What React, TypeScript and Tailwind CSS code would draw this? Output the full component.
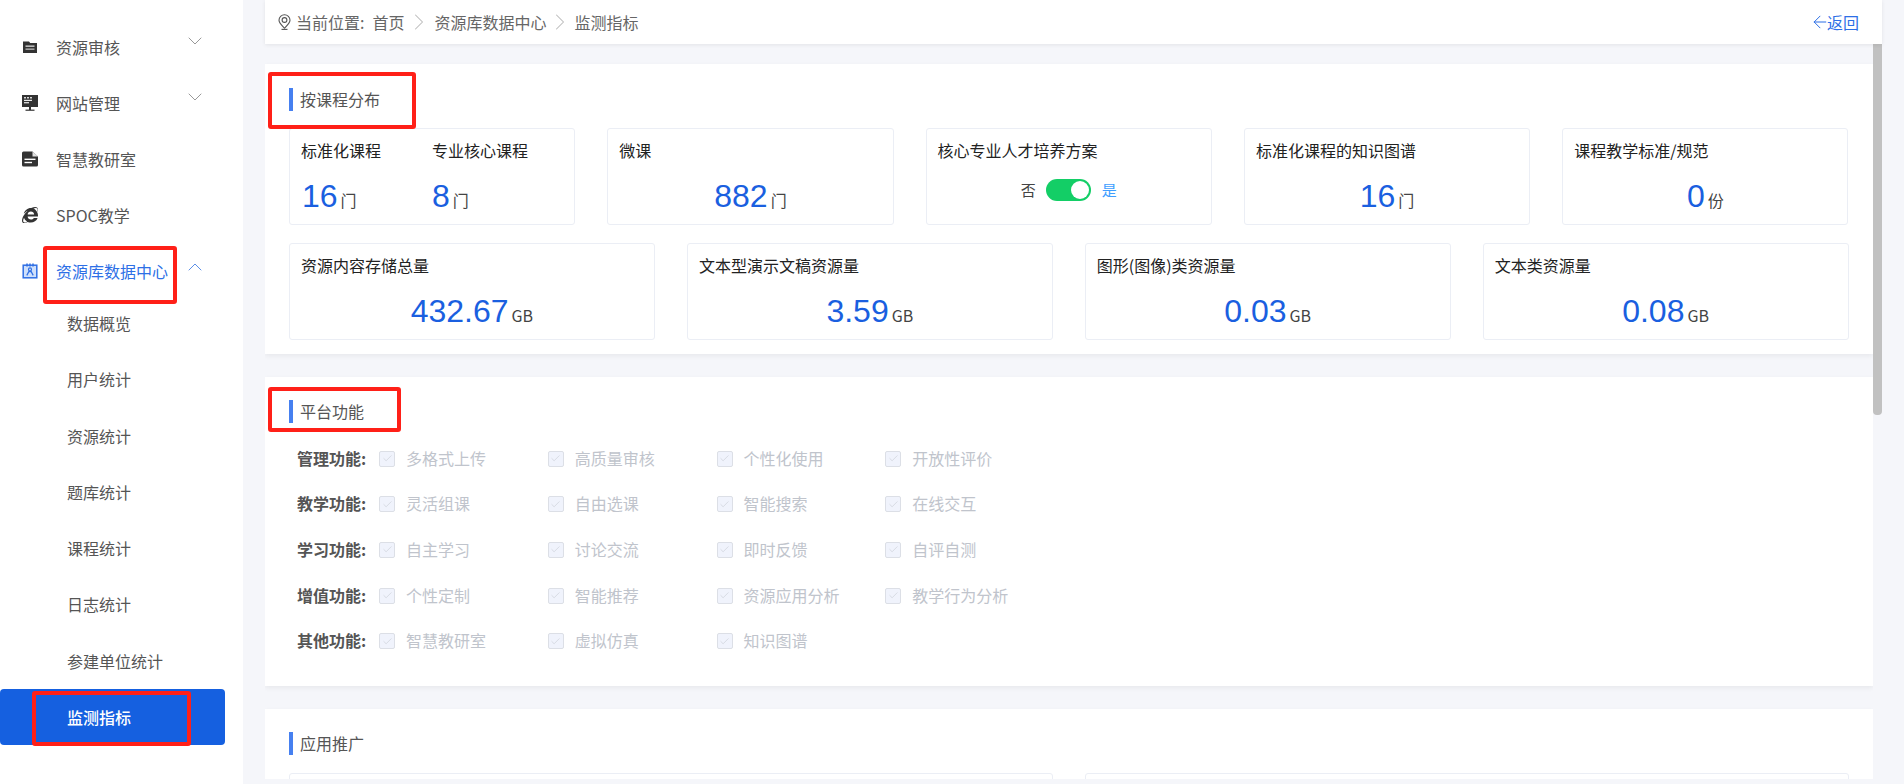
import React from "react";
import { ChevronDown, ChevronUp, ChevronRight, ArrowLeft, Check } from "lucide-react";
import { FaInternetExplorer } from "react-icons/fa";

const FolderIcon = () => (
  <svg width="16" height="16" viewBox="0 0 16 16" className="shrink-0">
    <path d="M1 2.5h6l1.2 1.4H15V14H1z" fill="#333" />
    <rect x="3.5" y="6.5" width="9" height="1.3" fill="#ddd" />
    <rect x="3.5" y="9.5" width="9" height="1.3" fill="#bbb" />
  </svg>
);
const MonitorIcon = () => (
  <svg width="16" height="16" viewBox="0 0 16 16" className="shrink-0">
    <rect x="0" y="0" width="16" height="12" fill="#333" />
    <rect x="2" y="2.2" width="2" height="1.2" fill="#fff" />
    <rect x="5" y="2.2" width="2" height="1.2" fill="#fff" />
    <rect x="8" y="2.2" width="2" height="1.2" fill="#fff" />
    <rect x="2" y="4.8" width="8" height="1.1" fill="#fff" />
    <rect x="2" y="7.2" width="5" height="1.1" fill="#fff" />
    <rect x="7" y="12" width="2" height="3" fill="#333" />
    <rect x="3.5" y="14.6" width="9" height="1.2" fill="#333" />
  </svg>
);
const DocIcon = () => (
  <svg width="16" height="16" viewBox="0 0 16 16" className="shrink-0">
    <path d="M1.5 0.5H10.5L16 5.5V14a1.5 1.5 0 0 1-1.5 1.5H1.5A1.5 1.5 0 0 1 0 14V2A1.5 1.5 0 0 1 1.5 .5z" fill="#333" />
    <path d="M10.5 .5V5.5H16z" fill="#fff" opacity="0.85" />
    <rect x="2.5" y="7.6" width="11" height="1.4" fill="#fff" />
    <rect x="2.5" y="10.8" width="7.5" height="1.4" fill="#fff" />
  </svg>
);
const IdIcon = () => (
  <svg width="16" height="16" viewBox="0 0 16 16" className="shrink-0">
    <rect x="1.2" y="2.2" width="13.6" height="12.6" fill="#cfe0fb" stroke="#2f6fe4" strokeWidth="1.5" />
    <path d="M5 0.5v3M8 0.5v3M11 0.5v3" stroke="#2f6fe4" strokeWidth="1.5" />
    <circle cx="8" cy="6.4" r="1.5" fill="none" stroke="#2f6fe4" strokeWidth="1.2" />
    <path d="M4.8 12.4L6.8 8.6h2.4l2 3.8" fill="none" stroke="#2f6fe4" strokeWidth="1.2" />
  </svg>
);
const PinIcon = () => (
  <svg width="13" height="16" viewBox="0 0 13 16" className="shrink-0" fill="none" stroke="#555" strokeWidth="1.1">
    <path d="M6.5 14.2C3.4 11 1 8.8 1 6.2a5.5 5.5 0 0 1 11 0c0 2.6-2.4 4.8-5.5 8z" />
    <circle cx="6.5" cy="6" r="2.4" />
    <path d="M3.5 15.4h6" />
  </svg>
);

const RedBox = ({ className }: { className: string }) => (
  <div className={`absolute border-4 border-[#ff2018] rounded-[3px] pointer-events-none ${className}`} />
);

const topItems = [
  { label: "资源审核", icon: <FolderIcon />, chevron: true },
  { label: "网站管理", icon: <MonitorIcon />, chevron: true },
  { label: "智慧教研室", icon: <DocIcon />, chevron: false },
  { label: "SPOC教学", icon: <FaInternetExplorer size={16} color="#333" className="shrink-0" />, chevron: false },
];
const subItems = ["数据概览", "用户统计", "资源统计", "题库统计", "课程统计", "日志统计", "参建单位统计"];

const Sidebar = () => (
  <aside className="w-[243px] h-[784px] shrink-0 bg-white pt-[19px] pr-[18px] text-[16px] leading-[24px] text-[#555]">
    {topItems.map((it) => (
      <div key={it.label} className="relative h-[56px] flex items-center pl-[22px] pr-[18px]">
        {it.icon}
        <span className="ml-[18px]">{it.label}</span>
        {it.chevron && <ChevronDown size={24} strokeWidth={1} color="#999" className="ml-auto mb-[12px]" />}
      </div>
    ))}
    <div className="relative h-[56px] flex items-center pl-[22px] pr-[18px] text-[#2d6fe6]">
      <IdIcon />
      <span className="ml-[18px]">资源库数据中心</span>
      <ChevronUp size={24} strokeWidth={1} color="#5b8fe8" className="ml-auto mb-[8px]" />
      <RedBox className="left-[43px] top-[3px] w-[134px] h-[58px]" />
    </div>
    <div className="-mt-[4px]">
      {subItems.map((s) => (
        <div key={s} className="h-[56.25px] flex items-center pl-[68px] -translate-x-px">{s}</div>
      ))}
      <div className="relative h-[56px] flex items-center pl-[68px] rounded-[4px] bg-[#1560e0] text-white font-medium">
        <span className="-translate-x-px">监测指标</span>
        <RedBox className="left-[32px] top-[2px] w-[159px] h-[55px]" />
      </div>
    </div>
  </aside>
);

const Num = ({ value, unit }: { value: string; unit: string }) => (
  <div className="flex items-baseline h-[40px] leading-[40px]">
    <span className="text-[32px] text-[#1a5fe0] font-['Liberation_Sans',sans-serif]">{value}</span>
    <span className="ml-[3px] text-[16px] text-[#444]">{unit}</span>
  </div>
);

const Card = ({ title, children, className = "" }: { title?: string; children?: React.ReactNode; className?: string }) => (
  <div className={`h-[97px] border border-[#ebeef5] rounded-[3px] bg-white px-[11px] pt-[9px] text-[#222] ${className}`}>
    {title && <div className="text-[16px] leading-[24px]">{title}</div>}
    {children}
  </div>
);

const StatCard = ({ title, value, unit }: { title: string; value: string; unit: string }) => (
  <Card title={title}>
    <div className="mt-[14px] flex justify-center">
      <Num value={value} unit={unit} />
    </div>
  </Card>
);

const Title = ({ text }: { text: string }) => (
  <div className="flex items-center h-[23px] text-[16px] text-[#555]">
    <div className="w-[4px] h-[23px] bg-[#4680f0]" />
    <span className="ml-[7px] -translate-y-px">{text}</span>
  </div>
);

const funcs = [
  { label: "管理功能:", items: ["多格式上传", "高质量审核", "个性化使用", "开放性评价"] },
  { label: "教学功能:", items: ["灵活组课", "自由选课", "智能搜索", "在线交互"] },
  { label: "学习功能:", items: ["自主学习", "讨论交流", "即时反馈", "自评自测"] },
  { label: "增值功能:", items: ["个性定制", "智能推荐", "资源应用分析", "教学行为分析"] },
  { label: "其他功能:", items: ["智慧教研室", "虚拟仿真", "知识图谱"] },
];

const sectionClass = "relative bg-white px-[24px] shadow-[0_2px_5px_rgba(0,0,0,0.06)]";

export default function App() {
  return (
    <div className="flex w-[1904px] h-[784px] overflow-hidden bg-[#f5f6fa] font-['Noto_Sans_CJK_SC',sans-serif]">
      <Sidebar />
      <main className="ml-[22px] w-[1617px] h-[784px] flex flex-col">
        <header className="relative z-10 h-[44px] shrink-0 bg-white shadow-[0_1px_4px_rgba(0,0,0,0.08)] flex items-center pl-[13px] pr-[23px] text-[16px] text-[#666]">
          <PinIcon />
          <span className="ml-[5px]">当前位置:</span>
          <span className="ml-[8px]">首页</span>
          <ChevronRight size={28} strokeWidth={0.9} color="#bbb" className="ml-[1px] mr-[1px]" />
          <span>资源库数据中心</span>
          <ChevronRight size={28} strokeWidth={0.9} color="#bbb" />
          <span>监测指标</span>
          <span className="ml-auto flex items-center text-[#2d6fe6]">
            <ArrowLeft size={20} strokeWidth={1.2} className="-mr-[3px]" />
            返回
          </span>
        </header>
        <div className="flex h-[735px] overflow-hidden">
          <div className="w-[1608px] pt-[20px] overflow-hidden">
            <section className={`${sectionClass} h-[290px] pt-[24px]`}>
              <Title text="按课程分布" />
              <RedBox className="left-[3px] top-[8px] w-[148px] h-[57px]" />
              <div className="mt-[17px] grid grid-cols-5 gap-x-[32px] w-[1559.5px]">
                <Card>
                  <div className="flex">
                    <div className="w-[131px]">
                      <div className="text-[16px] leading-[24px]">标准化课程</div>
                      <div className="mt-[14px] pl-[1px]"><Num value="16" unit="门" /></div>
                    </div>
                    <div>
                      <div className="text-[16px] leading-[24px]">专业核心课程</div>
                      <div className="mt-[14px]"><Num value="8" unit="门" /></div>
                    </div>
                  </div>
                </Card>
                <StatCard title="微课" value="882" unit="门" />
                <Card title="核心专业人才培养方案">
                  <div className="mt-[17px] flex items-center justify-center h-[22px]">
                    <span className="text-[15px] text-[#444]">否</span>
                    <div className="ml-[10px] mr-[11px] w-[45px] h-[22px] rounded-full bg-[#13ce66] flex items-center justify-end pr-[2px]">
                      <div className="w-[18px] h-[18px] rounded-full bg-white" />
                    </div>
                    <span className="text-[15px] text-[#409eff]">是</span>
                  </div>
                </Card>
                <StatCard title="标准化课程的知识图谱" value="16" unit="门" />
                <StatCard title="课程教学标准/规范" value="0" unit="份" />
              </div>
              <div className="mt-[18px] grid grid-cols-4 gap-x-[32px] w-[1559.5px]">
                <StatCard title="资源内容存储总量" value="432.67" unit="GB" />
                <StatCard title="文本型演示文稿资源量" value="3.59" unit="GB" />
                <StatCard title="图形(图像)类资源量" value="0.03" unit="GB" />
                <StatCard title="文本类资源量" value="0.08" unit="GB" />
              </div>
            </section>
            <section className={`${sectionClass} mt-[23px] h-[309px] pt-[23px]`}>
              <Title text="平台功能" />
              <RedBox className="left-[3px] top-[10px] w-[133px] h-[45px]" />
              <div className="mt-[13px] pl-[8px]">
                {funcs.map((f) => (
                  <div key={f.label} className="flex items-center h-[45.6px] text-[16px]">
                    <span className="w-[82px] font-bold text-[#555] -translate-y-px">{f.label}</span>
                    {f.items.map((t) => (
                      <div key={t} className="w-[168.75px] flex items-center">
                        <span className="w-[16px] h-[16px] rounded-[2px] bg-[#f0f3fc] border border-[#dcdfe6] flex items-center justify-center">
                          <Check size={11} strokeWidth={1.1} color="#c0c4cc" />
                        </span>
                        <span className="ml-[11px] text-[#c0c4cc] -translate-y-px">{t}</span>
                      </div>
                    ))}
                  </div>
                ))}
              </div>
            </section>
            <section className={`${sectionClass} mt-[23px] h-[200px] pt-[23px]`}>
              <Title text="应用推广" />
              <div className="mt-[18px] grid grid-cols-2 gap-x-[32px] w-[1559.5px]">
                <Card />
                <Card />
              </div>
            </section>
          </div>
          <div className="w-[9px] shrink-0">
            <div className="h-[371px] bg-[#c1c1c1] rounded-b-[4px]" />
          </div>
        </div>
      </main>
    </div>
  );
}
